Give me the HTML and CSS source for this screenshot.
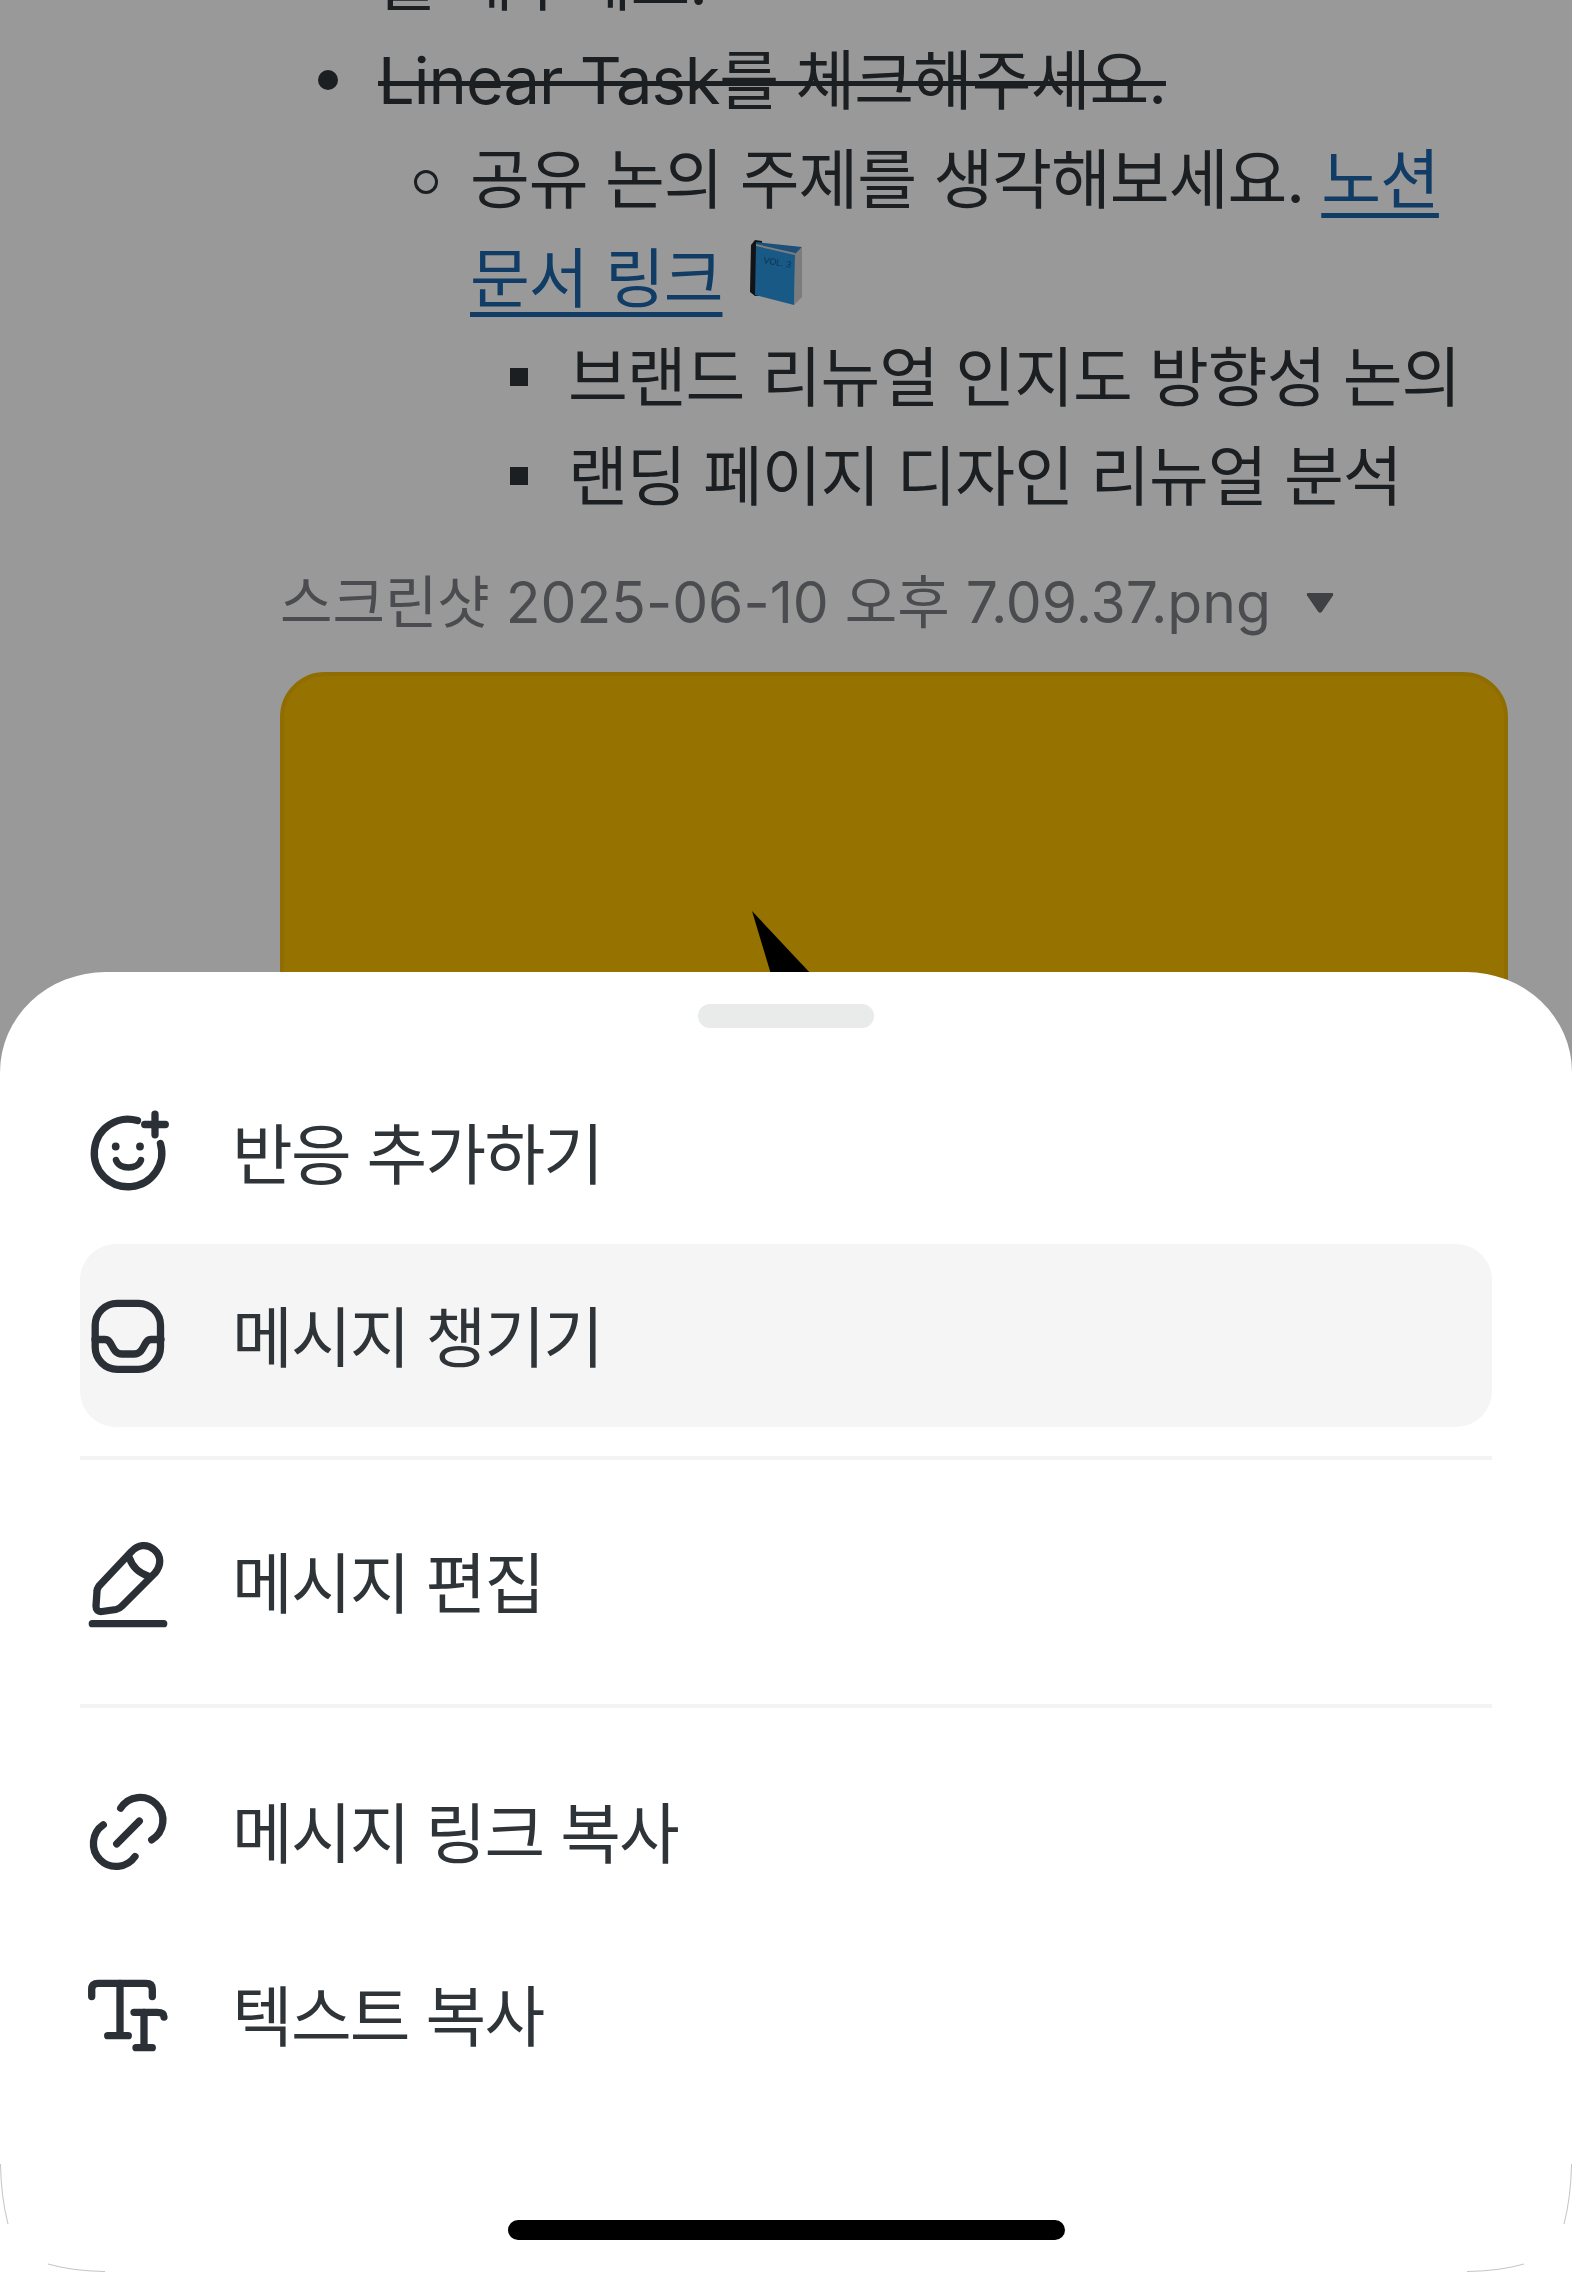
FILE: index.html
```html
<!DOCTYPE html>
<html lang="ko">
<head>
<meta charset="utf-8">
<title>메시지 메뉴</title>
<link rel="stylesheet" href="styles.css">
</head>
<body>
<div class="screen">
  <main class="message">
    <ul class="list-1">
      <li>를 해주세요.</li>
      <li><del>Linear Task를 체크해주세요.</del>
        <ul class="list-2">
          <li>공유 논의 주제를 생각해보세요. <a href="#">노션 문서 링크</a> <svg class="book" viewBox="0 0 53 65" aria-hidden="true">
              <path d="M1 5 L5 0 L12 1 L11 56 L5 56 L0 52 Z" fill="#1d2126"/>
              <path d="M6 2 L52 7 L46 15 L6 5 Z" fill="#2f86cc"/>
              <path d="M6 4 L45 13 L45 16 L6 7 Z" fill="#d0d0d0"/>
              <path d="M45 14 L52 7 L52 57 L44 65 Z" fill="#cfcfcf"/>
              <path d="M6 6 L45 15 L44 65 L5 55 Z" fill="#2a94e0"/>
              <text x="13" y="23" class="book-title" transform="rotate(10 13 23)">VOL. 3</text>
            </svg>
            <ul class="list-3">
              <li>브랜드 리뉴얼 인지도 방향성 논의</li>
              <li>랜딩 페이지 디자인 리뉴얼 분석</li>
            </ul>
          </li>
        </ul>
      </li>
    </ul>
    <div class="file-name">
      <span>스크린샷 2025-06-10 오후 7.09.37.png</span>
      <svg class="caret" viewBox="0 0 28 20" aria-hidden="true"><path d="M2.5 0 H25.5 Q28 0 27 2.500 L16 18.500 Q14 21 12 18.500 L1 2.500 Q0 0 2.500 0 Z"/></svg>
    </div>
    <figure class="attachment">
      <svg class="pointer" viewBox="0 0 75 80" aria-hidden="true"><path d="M0 0 L24 80 L75 80 Z"/></svg>
    </figure>
  </main>

  <div class="scrim"></div>

  <section class="sheet">
    <div class="grabber"></div>
    <ul class="menu">
      <li class="item">
        <svg class="icon" viewBox="0 0 84 84" aria-hidden="true">
          <path d="M51.500 9.600 A33.750 33.750 0 1 0 74.400 32.500"/>
          <path d="M58.700 13.500 H79.300 M69 3.200 V23.800"/>
          <circle class="dot" cx="29.700" cy="35.500" r="3.900"/>
          <circle class="dot" cx="54" cy="35.500" r="3.900"/>
          <path class="thin" d="M30 49 C33 59 52 59 55 49"/>
        </svg>
        <span class="label">반응 추가하기</span>
      </li>
      <li class="item item-active">
        <svg class="icon" viewBox="0 0 84 84" aria-hidden="true">
          <rect x="9.200" y="9.300" width="65.300" height="66" rx="22"/>
          <path d="M9 45.500 H19 C27 45.500 25 60 36 60 H48 C59 60 57 45.500 65 45.500 H75"/>
        </svg>
        <span class="label">메시지 챙기기</span>
      </li>
      <li class="divider"></li>
      <li class="item">
        <svg class="icon" viewBox="0 0 84 84" aria-hidden="true">
          <path d="M13 46 L45 12 C52 4.500 61 3.500 68 9.500 C76 16 75 26 69 33 L36 66 C34 68 32.500 69 30 69.500 L16 71.500 C12 72 10 70 10 66 L11 51 C11 49 12 47.500 13 46 Z"/>
          <path d="M43.500 18 C46 26 53 33 63 36.500"/>
          <path d="M6.300 83.700 H77.700"/>
        </svg>
        <span class="label">메시지 편집</span>
      </li>
      <li class="divider"></li>
      <li class="item">
        <svg class="icon" viewBox="0 0 84 84" aria-hidden="true">
          <path d="M34.700 18.200 A22.800 22.800 0 1 1 65.700 49.800"/>
          <path d="M17.300 34.800 A22.800 22.800 0 1 0 49 66.500"/>
          <path d="M30.700 53.800 L53.300 31.200"/>
        </svg>
        <span class="label">메시지 링크 복사</span>
      </li>
      <li class="item">
        <svg class="icon" viewBox="0 0 84 84" aria-hidden="true">
          <path d="M5.700 23.500 V16 Q5.700 10.300 12 10.300 H60 Q66.300 10.300 66.300 16 V23.500"/>
          <path d="M34 10.300 V62.700 M21.700 62.700 H42.300"/>
          <path d="M48 39.300 H71 Q78 39.300 78 44"/>
          <path d="M58 39.300 V74.700 M50 74.700 H66.300"/>
        </svg>
        <span class="label">텍스트 복사</span>
      </li>
    </ul>
    <div class="home-indicator"></div>
    <svg class="edge edge-left" viewBox="0 0 110 110" aria-hidden="true"><path d="M0.500 2 Q1 35 8 62 M48 102 Q72 109 105 109.500"/></svg>
    <svg class="edge edge-right" viewBox="0 0 110 110" aria-hidden="true"><path d="M0.500 2 Q1 35 8 62 M48 102 Q72 109 105 109.500"/></svg>
  </section>
</div>
</body>
</html>
```
FILE: styles.css
```css
* { box-sizing: border-box; }
html, body { margin: 0; padding: 0; background: #fff; }
body {
  font-family: Inter, "Noto Sans CJK KR", sans-serif;
  color: #2f3439;
}
.screen {
  position: relative;
  width: 1572px;
  height: 2272px;
  overflow: hidden;
  background: #fff;
}
.message {
  margin: -68px 64px 0 280px;
  font-size: 65px;
  line-height: 99px;
  letter-spacing: -1px;
}
.message ul { margin: 0; list-style: none; }
.message li { position: relative; }
.list-1 { padding-left: 98px; }
.list-2 { padding-left: 92px; }
.list-3 { padding-left: 98px; }
.list-1 > li::before {
  content: "";
  position: absolute;
  left: -60px;
  top: 39px;
  width: 20px;
  height: 20px;
  border-radius: 50%;
  background: #2f3439;
}
.list-2 > li::before {
  content: "";
  position: absolute;
  left: -56px;
  top: 40px;
  width: 18px;
  height: 18px;
  border: 3.500px solid #2f3439;
  border-radius: 50%;
}
.list-3 > li::before {
  content: "";
  position: absolute;
  left: -58px;
  top: 40px;
  width: 18px;
  height: 18px;
  background: #2f3439;
}
.message a { color: #1b65a8; text-decoration-thickness: 5px; text-underline-offset: 10px; }
.message del { text-decoration-thickness: 5px; }
.book { width: 53px; height: 65px; margin-left: 10px; vertical-align: -3px; }
.book-title { font-size: 9px; letter-spacing: 0; fill: #17558c; font-family: "Liberation Sans", sans-serif; }
.file-name {
  display: flex;
  align-items: center;
  gap: 35px;
  margin-top: 41px;
  font-size: 57px;
  line-height: 72px;
  letter-spacing: 0;
  color: #7c7f84;
}
.caret { width: 28px; height: 20px; fill: #696d72; }
.attachment {
  position: relative;
  margin: 33px 0 0;
  height: 900px;
  background: #fabe00;
  border: 4px solid #f0b600;
  border-radius: 45px;
}
.pointer {
  position: absolute;
  left: 468px;
  top: 235px;
  width: 75px;
  height: 80px;
  fill: #000;
}
.scrim {
  position: absolute;
  inset: 0;
  background: rgba(0, 0, 0, .4);
}
.sheet {
  position: absolute;
  left: 0;
  right: 0;
  bottom: 0;
  height: 1300px;
  background: #fff;
  border-radius: 106px 106px 0 0 / 100px 100px 0 0;
  padding: 32px 80px 0 80px;
}
.grabber {
  width: 176px;
  height: 24px;
  margin: 0 auto 33px;
  border-radius: 12px;
  background: #e9ebea;
}
.menu { list-style: none; margin: 0; padding: 0; }
.item {
  display: flex;
  align-items: center;
  gap: 62px;
  height: 183px;
  padding-left: 6px;
  border-radius: 36px;
}
.label {
  margin-bottom: 6px;
  font-size: 66px;
  letter-spacing: -1.800px;
}
.item-active { background: #f5f5f5; }
.divider {
  height: 4px;
  margin: 29px 0 30px;
  background: #f3f3f3;
}
.divider + .item + .divider { margin: 31px 0 32px; }
.icon {
  flex: none;
  width: 84px;
  height: 84px;
  overflow: visible;
  fill: none;
  stroke: #2b3036;
  stroke-width: 7.300;
  stroke-linecap: round;
  stroke-linejoin: round;
}
.icon .dot { fill: #2b3036; stroke: none; }
.icon .thin { stroke-width: 6.500; }
.home-indicator {
  position: absolute;
  left: 508px;
  top: 1248px;
  width: 557px;
  height: 20px;
  border-radius: 10px;
  background: #000;
}
.edge {
  position: absolute;
  bottom: 0;
  width: 110px;
  height: 110px;
  fill: none;
  stroke: #c4c4c4;
  stroke-width: 1;
}
.edge-left { left: 0; }
.edge-right { right: 0; transform: scaleX(-1); }
```
